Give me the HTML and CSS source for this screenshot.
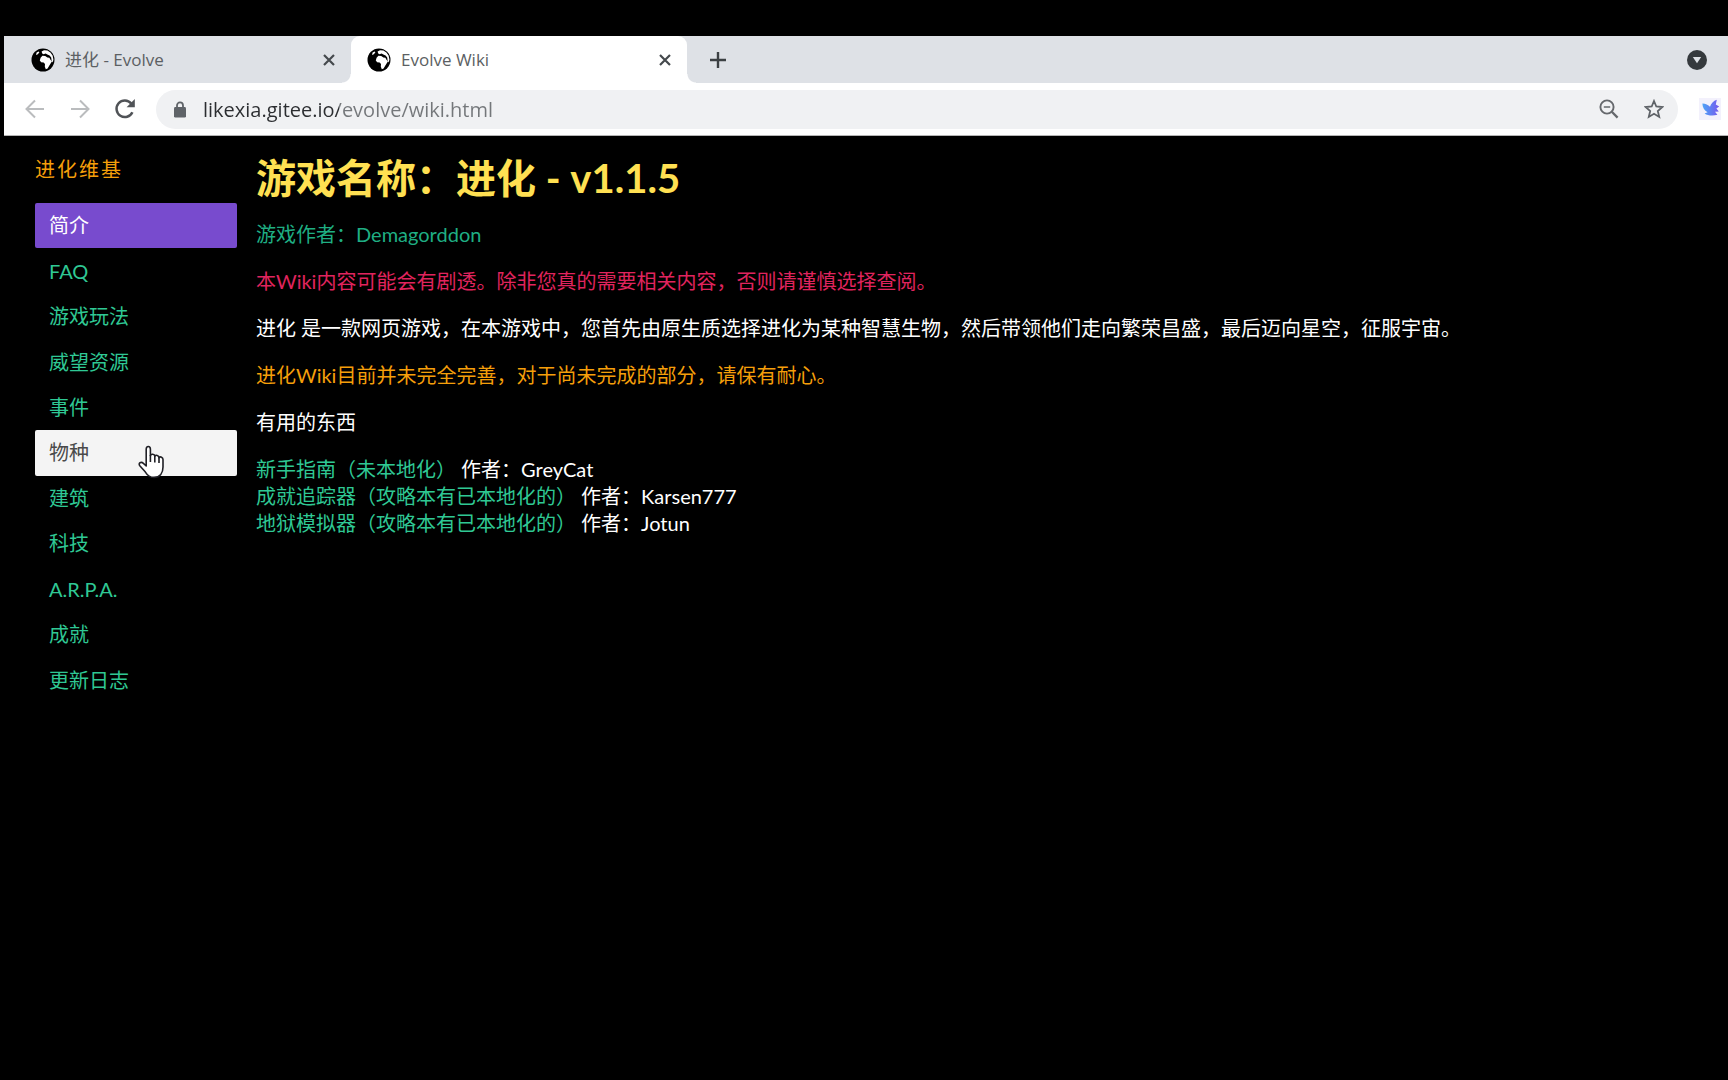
FILE: index.html
```html
<!DOCTYPE html>
<html lang="zh-CN">
<head>
<meta charset="utf-8">
<title>Evolve Wiki</title>
<link rel="stylesheet" href="styles.css">
</head>
<body>
<svg class="defs" width="0" height="0" aria-hidden="true">
  <symbol id="globe" viewBox="0 0 24 24">
    <circle cx="12" cy="12" r="11.5" fill="#000"/>
    <path fill="#fff" d="M10.6 3.6 13 2.2 16.4 2.6 19.4 4.6 21.6 7.6 22.4 11.4 21.8 14.6 20.6 12.4 20.2 9.6 18.6 7.4 16.4 6.6 14.6 5.6 12.6 6.2 11.2 5.4Z"/>
    <path fill="#fff" d="M9.6 9.8 11.4 7.8 14.2 8 16.4 9.4 18.4 9.8 19.6 12 21 13.2 19.6 15.4 18.2 17.8 16.6 20.6 14.8 21.2 13.8 18.6 14 16 12.6 14.4 10.2 14.2 8.8 12.4Z"/>
    <path fill="#fff" d="M5.6 4.6 7.6 3.4 8.4 4.2 6.8 6.2 5 7Z"/>
  </symbol>
  <symbol id="close" viewBox="0 0 14 14">
    <path d="M2 2 12 12M12 2 2 12" fill="none" stroke="#45494d" stroke-width="2.2"/>
  </symbol>
</svg>

<div class="browser">
  <header class="chrome">
    <div class="tabs">
      <div class="tab">
        <svg class="favicon" aria-hidden="true"><use href="#globe"/></svg>
        <span class="tab-title">进化 - Evolve</span>
        <button class="tab-close" aria-label="关闭"><svg width="14" height="14"><use href="#close"/></svg></button>
      </div>
      <div class="tab tab-active">
        <svg class="favicon" aria-hidden="true"><use href="#globe"/></svg>
        <span class="tab-title">Evolve Wiki</span>
        <button class="tab-close" aria-label="关闭"><svg width="14" height="14"><use href="#close"/></svg></button>
      </div>
      <button class="icon-button new-tab" aria-label="新标签页">
        <svg width="18" height="18" viewBox="0 0 18 18"><path d="M9 1V17M1 9H17" stroke="#3c4043" stroke-width="2.4"/></svg>
      </button>
      <button class="icon-button tab-search" aria-label="搜索标签页">
        <svg width="20" height="20" viewBox="0 0 20 20"><circle cx="10" cy="10" r="10" fill="#35393d"/><path d="M5.8 7H14.2L10 13.2Z" fill="#dee1e6"/></svg>
      </button>
    </div>
    <div class="toolbar">
      <div class="nav-buttons">
        <button class="icon-button" aria-label="后退">
          <svg width="20" height="20" viewBox="0 0 20 20"><path d="M19 10H2M10 1.5 1.5 10 10 18.5" fill="none" stroke="#babcbe" stroke-width="2"/></svg>
        </button>
        <button class="icon-button" aria-label="前进">
          <svg width="20" height="20" viewBox="0 0 20 20"><path d="M1 10H18M10 1.5 18.5 10 10 18.5" fill="none" stroke="#babcbe" stroke-width="2"/></svg>
        </button>
        <button class="icon-button" aria-label="重新加载">
          <svg width="22" height="22" viewBox="0 0 22 22"><path d="M18.4 14.2A8.3 8.3 0 1 1 17.2 5.4" fill="none" stroke="#505357" stroke-width="2.5"/><path d="M20.8 1V9.2H12.6Z" fill="#505357"/></svg>
        </button>
      </div>
      <div class="omnibox">
        <svg width="12" height="17" viewBox="0 0 12 17" aria-hidden="true"><path d="M3 7V4.4a3 3 0 0 1 6 0V7" fill="none" stroke="#5f6368" stroke-width="1.8"/><rect y="6" width="12" height="10.6" rx="1.4" fill="#5f6368"/></svg>
        <input class="address" type="text" aria-label="地址" value="likexia.gitee.io/evolve/wiki.html">
        <button class="icon-button" aria-label="缩放">
          <svg width="20" height="20" viewBox="0 0 20 20"><circle cx="8" cy="8" r="6.6" fill="none" stroke="#65686c" stroke-width="1.9"/><path d="M4.8 8H11.2" stroke="#65686c" stroke-width="1.5"/><path d="M12.8 12.8 18.6 18.6" stroke="#65686c" stroke-width="2.3"/></svg>
        </button>
        <button class="icon-button" aria-label="添加书签">
          <svg width="20" height="20" viewBox="0 0 20 20"><path d="M10 2 12.3 7.5 18.4 8 13.8 12 15.2 17.9 10 14.8 4.8 17.9 6.2 12 1.6 8 7.7 7.5Z" fill="none" stroke="#5f6368" stroke-width="1.8"/></svg>
        </button>
      </div>
      <button class="icon-button extension" aria-label="扩展程序">
        <svg width="22" height="22" viewBox="0 0 22 22"><defs><linearGradient id="bird" x1="0" x2="1"><stop offset="0" stop-color="#4ea4f6"/><stop offset="1" stop-color="#7658ee"/></linearGradient></defs><rect width="22" height="22" fill="#f3f1fc"/><path fill="url(#bird)" d="M3.4 5.4C6.6 5.6 9.2 6.8 11 8.8 12 5.4 14.4 3 17.8 1.8L16.8 6.6 20.2 8.4 17.4 10.4 19.8 13.6 16 13.8 18.4 16.8C14.2 18.2 8.6 17.8 5.6 15.6L8.6 14.2C5.4 12.4 3.4 9.2 3.4 5.4Z"/></svg>
      </button>
    </div>
  </header>

  <div class="page">
    <nav class="menu" aria-label="进化维基">
      <p class="menu-label">进化维基</p>
      <ul class="menu-list">
        <li><a class="is-active" href="#intro">简介</a></li>
        <li><a href="#faq">FAQ</a></li>
        <li><a href="#gameplay">游戏玩法</a></li>
        <li><a href="#prestige">威望资源</a></li>
        <li><a href="#events">事件</a></li>
        <li><a class="is-hovered" href="#species">物种</a>
          <svg class="pointer" width="27" height="34" viewBox="0 0 27 34" aria-hidden="true"><path d="M8.2 21V4.2C8.2.5 12.4.5 12.4 4.2V10.6C13 8.6 16.6 8.8 16.8 11.2 17.8 9.6 20.8 10.2 21 12.6 22.4 11.2 25 12.2 25 14.6V22C25 28 22 32.4 16 32.4 11.4 32.4 9.4 30.4 7.2 26.8L1.8 20.8C-.2 18 3.2 16.2 5.4 18.4Z" fill="#fff" stroke="#202026" stroke-width="1.6" stroke-linejoin="round"/><path d="M12.4 10V17M16.8 11V17.4M21 12.4V18" stroke="#202026" stroke-width="1.6"/></svg>
        </li>
        <li><a href="#buildings">建筑</a></li>
        <li><a href="#tech">科技</a></li>
        <li><a href="#arpa">A.R.P.A.</a></li>
        <li><a href="#achievements">成就</a></li>
        <li><a href="#changelog">更新日志</a></li>
      </ul>
    </nav>
    <main class="content">
      <h1 class="title">游戏名称：进化 - v1.1.5</h1>
      <p class="author">游戏作者：Demagorddon</p>
      <p class="danger">本Wiki内容可能会有剧透。除非您真的需要相关内容，否则请谨慎选择查阅。</p>
      <p>进化 是一款网页游戏，在本游戏中，您首先由原生质选择进化为某种智慧生物，然后带领他们走向繁荣昌盛，最后迈向星空，征服宇宙。</p>
      <p class="warning">进化Wiki目前并未完全完善，对于尚未完成的部分，请保有耐心。</p>
      <p>有用的东西</p>
      <ul class="links">
        <li><a href="#guide">新手指南（未本地化）</a> 作者：GreyCat</li>
        <li><a href="#tracker">成就追踪器（攻略本有已本地化的）</a> 作者：Karsen777</li>
        <li><a href="#simulator">地狱模拟器（攻略本有已本地化的）</a> 作者：Jotun</li>
      </ul>
    </main>
  </div>
</div>
</body>
</html>
```
FILE: styles.css
```css
* {
  box-sizing: border-box;
}

body {
  margin: 0;
  min-height: 100vh;
  background: #000;
  color: #fff;
  font-family: Lato, "Noto Sans CJK SC", sans-serif;
  font-size: 20px;
  line-height: 27px;
}

ul,
p,
h1 {
  margin: 0;
  padding: 0;
}

ul {
  list-style: none;
}

a {
  color: #2fc894;
  text-decoration: none;
}

button {
  display: flex;
  align-items: center;
  justify-content: center;
  flex: none;
  padding: 0;
  border: 0;
  background: none;
}

.defs {
  position: absolute;
}

.browser {
  padding: 36px 0 0 4px;
}

/* Browser window */

.chrome {
  background: #fff;
  border-bottom: 1px solid #b4b4b4;
  font-family: "Open Sans", "Noto Sans CJK SC", sans-serif;
}

.tabs {
  display: flex;
  align-items: center;
  height: 47px;
  padding-right: 19px;
  background: #dee1e6;
}

.tab {
  display: flex;
  align-items: center;
  gap: 10px;
  width: 336px;
  height: 47px;
  padding: 0 13px 0 16px;
}

.tab:first-child {
  width: 347px;
  padding-left: 27px;
}

.tab-active {
  position: relative;
  background: #fff;
  border-radius: 9px 9px 0 0;
}

.tab-active::before,
.tab-active::after {
  content: "";
  position: absolute;
  bottom: 0;
  width: 9px;
  height: 9px;
}

.tab-active::before {
  right: 100%;
  background: radial-gradient(circle at 0 0, #dee1e6 8px, #fff 9px);
}

.tab-active::after {
  left: 100%;
  background: radial-gradient(circle at 100% 0, #dee1e6 8px, #fff 9px);
}

.favicon {
  flex: none;
  width: 24px;
  height: 24px;
}

.tab-title {
  flex: 1;
  color: #5c5f63;
  font-size: 17px;
  font-weight: 400;
  white-space: nowrap;
}

.tab-close {
  width: 18px;
  height: 18px;
}

.icon-button {
  width: 24px;
  height: 24px;
}

.new-tab {
  margin-left: 19px;
}

.tab-search {
  margin-left: auto;
}

.toolbar {
  display: flex;
  align-items: center;
  height: 52px;
  padding: 0 6px 0 19px;
}

.nav-buttons {
  display: flex;
  gap: 21px;
}

.omnibox {
  display: flex;
  flex: 1;
  align-items: center;
  height: 39px;
  margin: 0 20px 0 19px;
  padding: 0 12px 0 18px;
  border-radius: 20px;
  background: #f0f1f3;
  gap: 21px;
}

.address {
  flex: 1;
  min-width: 0;
  margin-left: -4px;
  padding: 0;
  border: 0;
  outline: 0;
  /* Host name dark, path grey */
  background: linear-gradient(90deg, #2b2d30 136px, #74777a 136px);
  -webkit-background-clip: text;
  background-clip: text;
  -webkit-text-fill-color: transparent;
  color: #2b2d30;
  font-family: "Open Sans", sans-serif;
  font-size: 20px;
  line-height: 27px;
}

/* Wiki page */

.page {
  display: flex;
  gap: 19px;
  padding: 20px 30px 40px 31px;
}

.menu {
  flex: none;
  width: 202px;
}

.menu-label {
  margin-bottom: 20px;
  color: #f59f0a;
  letter-spacing: 2px;
}

.menu-list {
  display: flex;
  flex-direction: column;
  height: 500px;
}

.menu-list li {
  position: relative;
  display: flex;
  flex: 1;
}

.menu-list a {
  display: flex;
  flex: 1;
  align-items: center;
  padding: 0 14px;
  border-radius: 2px;
}

.menu-list .is-active {
  background: #784bce;
  color: #fff;
}

.menu-list .is-hovered {
  background: #f4f4f4;
  color: #4a4a4a;
}

.pointer {
  position: absolute;
  top: 15px;
  left: 103px;
}

.content {
  flex: 1;
  min-width: 0;
}

.content p {
  margin-bottom: 20px;
}

.content .title {
  margin-bottom: 20px;
  color: #ffe052;
  font-size: 40px;
  font-weight: 700;
  line-height: 45px;
}

.content .author {
  color: #1fae83;
}

.content .danger {
  color: #e0245e;
}

.content .warning {
  color: #f59f0a;
}
```
